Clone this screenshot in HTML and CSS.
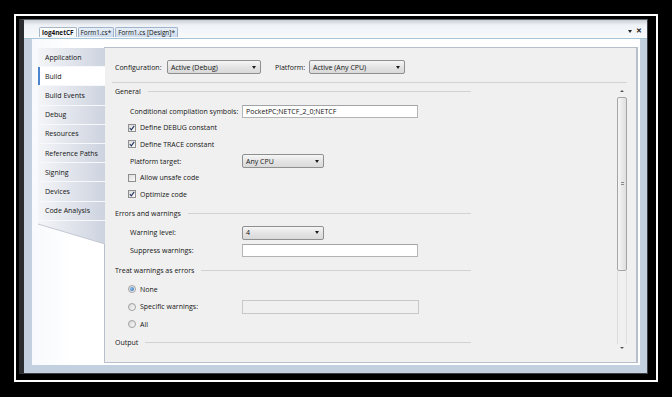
FILE: index.html
```html
<!DOCTYPE html>
<html lang="en">
<head>
    <meta charset="UTF-8">
    <meta name="viewport" content="width=device-width, initial-scale=1.0">
    <title>log4netCF - Build</title>
    <link rel="stylesheet" href="styles.css">
</head>
<body>
    <div class="frame">
        <div class="window">
            <div class="tabstrip">
                <div class="doc-tab active">log4netCF</div>
                <div class="doc-tab">Form1.cs*</div>
                <div class="doc-tab">Form1.cs [Design]*</div>
                <div class="tab-tools">
                    <span class="drop"></span>
                    <span class="close">&#x2715;</span>
                </div>
            </div>

            <div class="client">
                <div class="designer">
                    <div class="sidebar">
                        <div class="side-tab">Application</div>
                        <div class="side-tab selected">Build</div>
                        <div class="side-tab">Build Events</div>
                        <div class="side-tab">Debug</div>
                        <div class="side-tab">Resources</div>
                        <div class="side-tab">Reference Paths</div>
                        <div class="side-tab">Signing</div>
                        <div class="side-tab">Devices</div>
                        <div class="side-tab">Code Analysis</div>
                        <svg class="side-end" width="67" height="24" viewBox="0 0 67 24">
                            <defs>
                                <linearGradient id="tabfill" x1="0" x2="1" y1="0" y2="0">
                                    <stop offset="0" stop-color="#f4f5f8"/>
                                    <stop offset="1" stop-color="#cdd3df"/>
                                </linearGradient>
                            </defs>
                            <polygon points="0,0 67,0 67,23 0,3" fill="url(#tabfill)"/>
                            <line x1="0" y1="3" x2="67" y2="23" stroke="#c3c8d1" stroke-width="1"/>
                        </svg>
                    </div>

                    <div class="panel">
                        <div class="config">
                            <span class="config-label">Configuration:</span>
                            <div class="select config-select">Active (Debug)<span class="arrow"></span></div>
                            <span class="config-label platform">Platform:</span>
                            <div class="select platform-select">Active (Any CPU)<span class="arrow"></span></div>
                        </div>
                        <div class="rule"></div>

                        <div class="scroll">
                            <div class="content">
                                <div class="title first">General</div>
                                <div class="rows general">
                                    <div class="row">
                                        <span class="label">Conditional compilation symbols:</span>
                                        <div class="textbox">PocketPC;NETCF_2_0;NETCF</div>
                                    </div>
                                    <div class="row option">
                                        <span class="check on"><svg width="6" height="6" viewBox="0 0 6 6"><path d="M0.8 3.2 L2.3 4.8 L5.2 0.9" fill="none" stroke="#22345c" stroke-width="1.1"/></svg></span>
                                        Define DEBUG constant
                                    </div>
                                    <div class="row option">
                                        <span class="check on"><svg width="6" height="6" viewBox="0 0 6 6"><path d="M0.8 3.2 L2.3 4.8 L5.2 0.9" fill="none" stroke="#22345c" stroke-width="1.1"/></svg></span>
                                        Define TRACE constant
                                    </div>
                                    <div class="row">
                                        <span class="label">Platform target:</span>
                                        <div class="select short">Any CPU<span class="arrow"></span></div>
                                    </div>
                                    <div class="row option">
                                        <span class="check"></span>
                                        Allow unsafe code
                                    </div>
                                    <div class="row option">
                                        <span class="check on"><svg width="6" height="6" viewBox="0 0 6 6"><path d="M0.8 3.2 L2.3 4.8 L5.2 0.9" fill="none" stroke="#22345c" stroke-width="1.1"/></svg></span>
                                        Optimize code
                                    </div>
                                </div>

                                <div class="title">Errors and warnings</div>
                                <div class="rows errors">
                                    <div class="row">
                                        <span class="label">Warning level:</span>
                                        <div class="select short">4<span class="arrow"></span></div>
                                    </div>
                                    <div class="row">
                                        <span class="label">Suppress warnings:</span>
                                        <div class="textbox"></div>
                                    </div>
                                </div>

                                <div class="title">Treat warnings as errors</div>
                                <div class="rows treat">
                                    <div class="row option">
                                        <span class="radio on"></span>
                                        None
                                    </div>
                                    <div class="row option">
                                        <span class="radio"></span>
                                        <span class="radio-label">Specific warnings:</span>
                                        <div class="textbox disabled"></div>
                                    </div>
                                    <div class="row option">
                                        <span class="radio"></span>
                                        All
                                    </div>
                                </div>

                                <div class="title last">Output</div>
                            </div>

                            <div class="scrollbar">
                                <div class="sb-arrow"><span class="up"></span></div>
                                <div class="sb-thumb"><span class="grip"></span></div>
                                <div class="sb-track"></div>
                                <div class="sb-arrow"><span class="down"></span></div>
                            </div>
                        </div>
                    </div>
                </div>
            </div>
        </div>
    </div>
</body>
</html>
```

FILE: styles.css
```css
:root {
    --frame-blue: #c3d0df;
    --panel-bg: #f0f0f0;
    --panel-border: #b7bfca;
    --text: #141414;
    --field-border: #b2b4b8;
}

body {
    margin: 0;
    width: 672px;
    height: 397px;
    overflow: hidden;
    background: #000;
    font-family: "Open Sans", "Noto Sans", sans-serif;
    font-size: 7px;
    color: var(--text);
}

.frame {
    margin: 14px 0 0 14px;
    width: 644px;
    height: 368px;
    box-sizing: border-box;
    border: 2px solid #fff;
    padding: 3px 0 0 3px;
}

.window {
    width: 629px;
    height: 355px;
    box-sizing: border-box;
    border-top: 1px solid #5d636b;
    border-left: 5px solid #2a2c30;
    border-right: 1px solid #3c4046;
    border-bottom: 1px solid #3c4046;
    display: flex;
    flex-direction: column;
    background: var(--frame-blue);
}

/* document tabs */

.tabstrip {
    height: 18px;
    flex: none;
    display: flex;
    align-items: flex-end;
    padding-left: 15px;
    background: linear-gradient(#c9ced6, #eef2f7 5px, #f8fafc);
}

.doc-tab {
    height: 10px;
    margin-bottom: 1px;
    margin-right: 1px;
    padding: 0 2px;
    box-sizing: border-box;
    font-size: 6.4px;
    line-height: 9px;
    border: 1px solid #9fb3cc;
    border-bottom: none;
    border-radius: 2px 2px 0 0;
    background: linear-gradient(#e8eff8, #cddbec);
    white-space: nowrap;
}

.doc-tab.active {
    font-weight: 700;
    background: linear-gradient(#ffffff, #f3f6fa);
    border-color: #a9b6c6;
}

.tab-tools {
    margin-left: auto;
    align-self: center;
    display: flex;
    align-items: center;
    gap: 4px;
    padding: 4px 5px 0 0;
}

.drop {
    width: 0;
    height: 0;
    border-left: 2.5px solid transparent;
    border-right: 2.5px solid transparent;
    border-top: 3px solid #222;
}

.close {
    font-size: 7px;
    font-weight: 700;
    line-height: 8px;
    color: #222;
}

/* client area */

.client {
    flex: 1;
    display: flex;
    border-top: 1px solid #a6c4d8;
    padding: 0 7px 8px 8px;
}

.designer {
    flex: 1;
    display: flex;
    padding: 8px 2px 2px 6px;
    background: linear-gradient(to right, #f7f9fc, #ffffff 40px);
}

.sidebar {
    width: 67px;
    flex: none;
    padding-top: 1px;
    display: flex;
    flex-direction: column;
    margin-right: -1px;
    position: relative;
    z-index: 1;
}

.side-tab {
    height: 19.2px;
    box-sizing: border-box;
    padding-left: 7px;
    display: flex;
    align-items: center;
    border-bottom: 1px solid #f7f8fb;
    background: linear-gradient(to right, #f4f5f8, #cdd3df);
    white-space: nowrap;
}

.side-tab.selected {
    background: #fff;
    box-shadow: inset 2px 0 #4a86cf;
}

.side-end {
    display: block;
}

/* property page */

.panel {
    flex: 1;
    display: flex;
    flex-direction: column;
    border: 1px solid var(--panel-border);
    border-right-width: 2px;
    background: var(--panel-bg);
}

.config {
    height: 34px;
    box-sizing: border-box;
    padding: 4px 0 0 10px;
    display: flex;
    align-items: center;
}

.config-label {
    width: 52px;
}

.config-label.platform {
    width: 34px;
    margin-left: 14px;
}

.select {
    height: 14px;
    box-sizing: border-box;
    display: flex;
    align-items: center;
    padding-left: 3px;
    border: 1px solid #8e8f8f;
    border-radius: 2px;
    background: linear-gradient(#f6f6f6, #e4e4e4 50%, #d9d9d9);
    white-space: nowrap;
}

.config-select {
    width: 94px;
}

.platform-select {
    width: 96px;
}

.select.short {
    width: 82px;
}

.select .arrow {
    margin-left: auto;
    margin-right: 4px;
    width: 0;
    height: 0;
    border-left: 2px solid transparent;
    border-right: 2px solid transparent;
    border-top: 3px solid #1c1c1c;
}

.rule {
    height: 1px;
    margin: 0 9px 0 7px;
    background: #d3d3d3;
}

.scroll {
    flex: 1;
    display: flex;
}

.content {
    flex: 1;
    padding-left: 10px;
}

.title {
    width: 356px;
    height: 14px;
    margin-top: 4px;
    display: flex;
    align-items: center;
}

.title::after {
    content: "";
    flex: 1;
    margin-left: 7px;
    border-top: 1px solid #d2d2d2;
}

.title.first {
    margin-top: 1px;
}

.title.last {
    margin-top: 2px;
}

.rows {
    margin-top: 3px;
}

.rows.general {
    margin-top: 5px;
}

.row {
    display: flex;
    align-items: center;
    padding-left: 15px;
    white-space: nowrap;
}

.general .row {
    height: 16.6px;
}

.errors .row {
    height: 18px;
}

.treat .row {
    height: 17.5px;
}

.row.option {
    padding-left: 13px;
    gap: 4px;
}

.label {
    width: 112px;
    flex: none;
}

.radio-label {
    width: 98px;
}

.textbox {
    width: 176px;
    height: 13px;
    box-sizing: border-box;
    padding-left: 3px;
    line-height: 11px;
    border: 1px solid var(--field-border);
    border-top-color: #a2a4a8;
    background: #fff;
}

.textbox.disabled {
    width: 177px;
    height: 14px;
    background: var(--panel-bg);
    border-color: #c8c8c8;
}

.check {
    width: 8px;
    height: 8px;
    box-sizing: border-box;
    flex: none;
    display: flex;
    align-items: center;
    justify-content: center;
    border: 1px solid #8f8f8f;
    background: linear-gradient(135deg, #dcdcdc, #fbfbfb);
}

.radio {
    width: 8px;
    height: 8px;
    box-sizing: border-box;
    flex: none;
    border: 1px solid #a0a0a0;
    border-radius: 50%;
    background: linear-gradient(135deg, #d8d8d8, #fbfbfb);
    display: flex;
    align-items: center;
    justify-content: center;
}

.radio.on::after {
    content: "";
    width: 4px;
    height: 4px;
    border-radius: 50%;
    background: radial-gradient(circle at 35% 35%, #8fc0f0, #1f5fae);
}

/* scrollbar */

.scrollbar {
    width: 10px;
    flex: none;
    margin: 4px 9px 10px 0;
    display: flex;
    flex-direction: column;
}

.sb-arrow {
    height: 8px;
    display: flex;
    align-items: center;
    justify-content: center;
}

.sb-arrow span {
    width: 0;
    height: 0;
    border-left: 2px solid transparent;
    border-right: 2px solid transparent;
}

.sb-arrow .up {
    border-bottom: 2px solid #555;
}

.sb-arrow .down {
    border-top: 2px solid #555;
}

.sb-thumb {
    height: 174px;
    margin-top: 2px;
    box-sizing: border-box;
    border: 1px solid #a5a5a5;
    border-radius: 2px;
    background: linear-gradient(to right, #f6f6f6, #dedede);
    display: flex;
    align-items: center;
    justify-content: center;
}

.grip {
    width: 3px;
    height: 4px;
    background: repeating-linear-gradient(#8a8a8a 0 1px, transparent 1px 2px);
}

.sb-track {
    flex: 1;
    border-left: 1px solid #dddddd;
    border-right: 1px solid #dddddd;
}
```
